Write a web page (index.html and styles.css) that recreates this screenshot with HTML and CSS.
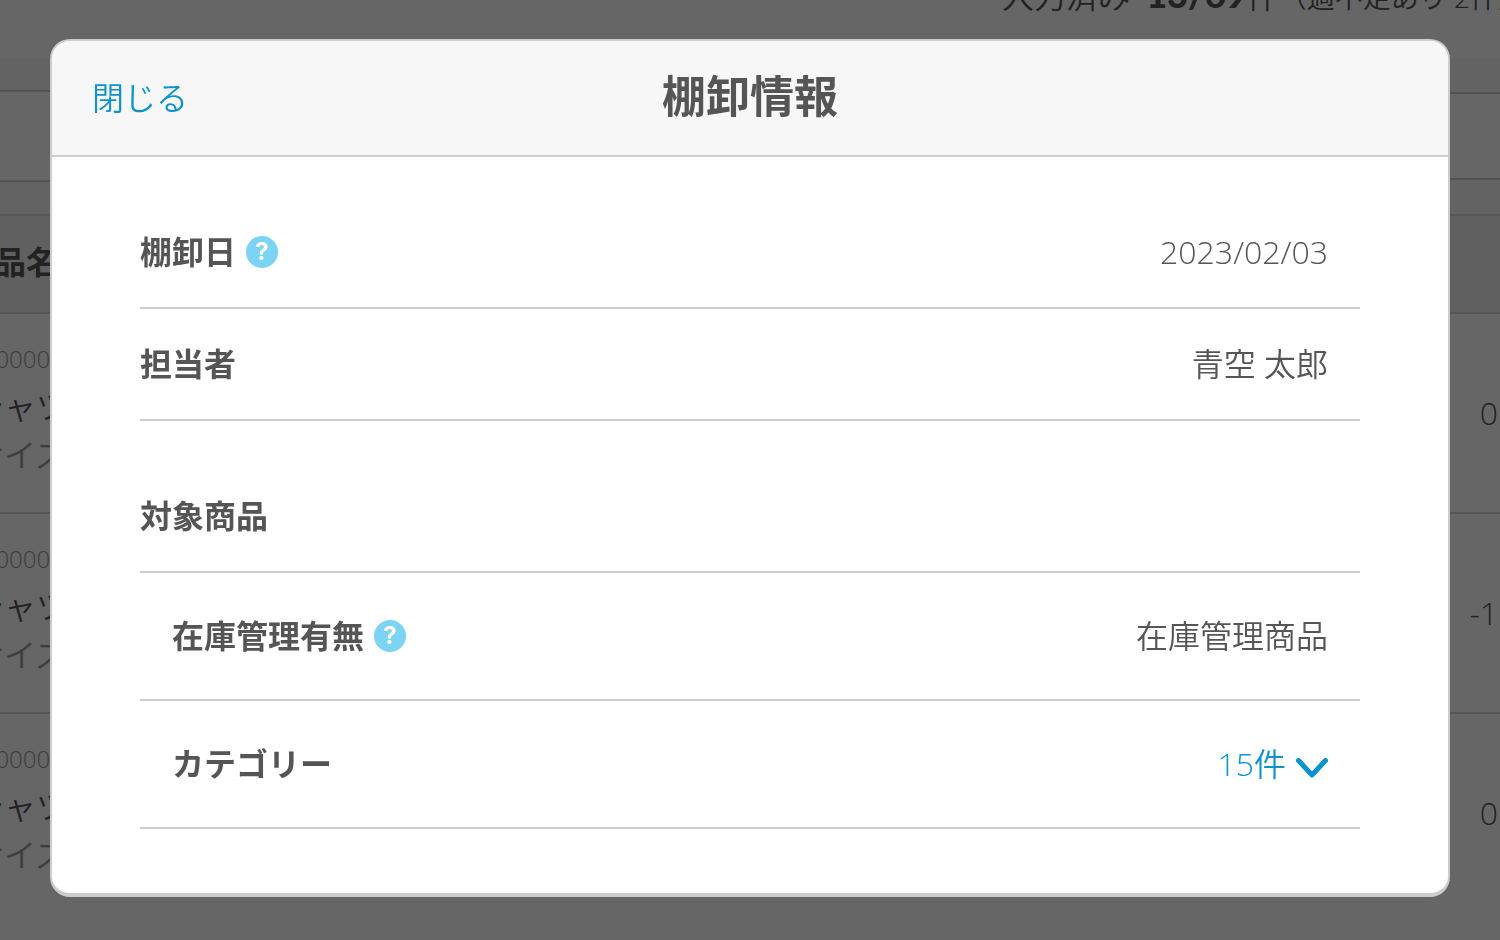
FILE: index.html
```html
<!DOCTYPE html>
<html lang="ja">
<head>
<meta charset="utf-8">
<meta name="viewport" content="width=device-width, initial-scale=1">
<title>棚卸情報</title>
<link rel="stylesheet" href="styles.css">
</head>
<body>
<div class="page">
  <p class="progress">入力済み <strong class="progress-count">13/69</strong>件<span class="progress-note">（過不足あり 2件）</span></p>
  <div class="toolbar">
    <input class="search" type="text" aria-label="商品検索">
    <button class="filter" type="button" aria-label="絞り込み"></button>
  </div>
  <table class="items">
    <thead>
      <tr><th class="items-name">商品名</th><th class="items-diff"></th></tr>
    </thead>
    <tbody>
      <tr>
        <td class="item"><div class="item-code">000000</div><div class="item-title">シャツ</div><div class="item-size">サイズ</div></td>
        <td class="items-diff">0</td>
      </tr>
      <tr>
        <td class="item"><div class="item-code">000000</div><div class="item-title">シャツ</div><div class="item-size">サイズ</div></td>
        <td class="items-diff">-1</td>
      </tr>
      <tr>
        <td class="item"><div class="item-code">000000</div><div class="item-title">シャツ</div><div class="item-size">サイズ</div></td>
        <td class="items-diff">0</td>
      </tr>
    </tbody>
  </table>
</div>

<div class="overlay">
  <section class="modal" role="dialog" aria-modal="true" aria-labelledby="modal-title">
    <header class="modal-header">
      <button class="close" type="button">閉じる</button>
      <h1 class="modal-title" id="modal-title">棚卸情報</h1>
    </header>
    <div class="modal-body">
      <div class="row">
        <h2 class="label">棚卸日</h2>
        <button class="help" type="button" aria-label="棚卸日のヘルプ">?</button>
        <span class="value">2023/02/03</span>
      </div>
      <div class="row">
        <h2 class="label">担当者</h2>
        <span class="value">青空 太郎</span>
      </div>
      <div class="row row-group">
        <h2 class="label">対象商品</h2>
      </div>
      <div class="row row-sub">
        <h3 class="label">在庫管理有無</h3>
        <button class="help" type="button" aria-label="在庫管理有無のヘルプ">?</button>
        <span class="value">在庫管理商品</span>
      </div>
      <div class="row row-sub">
        <h3 class="label">カテゴリー</h3>
        <button class="value expand" type="button" aria-expanded="false">15件
          <svg class="chevron" viewBox="0 0 32 20" aria-hidden="true"><path d="M2.5 2.5 16 17 29.5 2.5"/></svg>
        </button>
      </div>
    </div>
  </section>
</div>
</body>
</html>
```
FILE: styles.css
```css
* {
  box-sizing: border-box;
}

body {
  margin: 0;
  overflow: hidden;
  background: #fff;
  color: #555;
  font-family: "Open Sans", "Noto Sans CJK JP", sans-serif;
  font-size: 32px;
  font-weight: 350;
  line-height: 48px;
}

button,
input {
  margin: 0;
  padding: 0;
  border: 0;
  background: none;
  color: inherit;
  font: inherit;
}

button {
  cursor: pointer;
}

/* Stocktaking list behind the dialog */
.page {
  height: 100vh;
  margin-top: -30px;
}

.progress {
  display: flow-root;
  height: 88px;
  margin: 0 -26px 0 0;
  text-align: right;
  white-space: nowrap;
}

.progress-count {
  margin-left: 8px;
  font-family: Lato, sans-serif;
  font-size: 36px;
  font-weight: 900;
}

.progress-note {
  font-size: 28px;
}

.toolbar {
  display: flex;
  align-items: center;
  gap: 32px;
  height: 156px;
  margin: 0 -20px;
  background: #f7f7f7;
}

.search {
  flex: 1;
  height: 92px;
  border: 2px solid #ccc;
  background: #fff;
}

.filter {
  width: 200px;
  height: 88px;
  border: 2px solid #ccc;
  background: #fff;
}

.items {
  width: 100%;
  border-collapse: separate;
  border-spacing: 0;
}

.items th {
  height: 100px;
  border-top: 2px solid #d7d7d7;
  border-bottom: 2px solid #d7d7d7;
  background: #f0f0f0;
  font-weight: 700;
  text-align: left;
}

.items td {
  height: 200px;
  border-bottom: 2px solid #d7d7d7;
}

.items .items-name {
  padding: 0 0 4px;
  text-indent: -38px;
}

.items .item {
  padding: 0 0 12px;
  text-indent: -28px;
}

.item-code {
  font-size: 24px;
  text-indent: -32px;
}

.item-code,
.item-size {
  color: #999;
}

.items-diff {
  width: 200px;
  padding: 0 2px;
  text-align: right;
}

/* Dialog */
.overlay {
  position: fixed;
  inset: 0;
  padding: 39px 50px;
  overflow: hidden;
  background: rgba(0, 0, 0, 0.6);
}

.modal {
  overflow: hidden;
  border: 2px solid #ccc;
  border-bottom-width: 4px;
  border-radius: 20px;
  background: #fff;
}

.modal-header {
  display: grid;
  grid-template-columns: 1fr auto 1fr;
  align-items: center;
  height: 116px;
  padding: 0 40px;
  border-bottom: 2px solid #ccc;
  background: #f7f7f7;
}

.close {
  justify-self: start;
  color: #0d93cc;
}

.modal-title {
  margin: 0;
  padding-bottom: 4px;
  font-size: 44px;
  font-weight: 700;
}

.modal-body {
  padding: 40px 88px 64px;
}

.row {
  display: flex;
  align-items: center;
  gap: 10px;
  min-height: 112px;
  padding-right: 32px;
  border-bottom: 2px solid #ccc;
}

.row-group {
  margin-top: 40px;
}

.row-sub {
  min-height: 128px;
  padding-left: 32px;
}

.label {
  margin: 0;
  font-size: 32px;
  font-weight: 700;
}

.value {
  margin-left: auto;
}

.help {
  width: 32px;
  height: 32px;
  border-radius: 50%;
  background: #7dd3f2;
  color: #fff;
  font-family: Inter, sans-serif;
  font-size: 24px;
  font-weight: 700;
  line-height: 32px;
}

.expand {
  display: flex;
  align-items: center;
  gap: 10px;
  color: #0d93cc;
}

.chevron {
  width: 32px;
  height: 20px;
  margin-top: 8px;
  fill: none;
  stroke: currentColor;
  stroke-width: 5;
  stroke-linecap: round;
  stroke-linejoin: round;
}
```
